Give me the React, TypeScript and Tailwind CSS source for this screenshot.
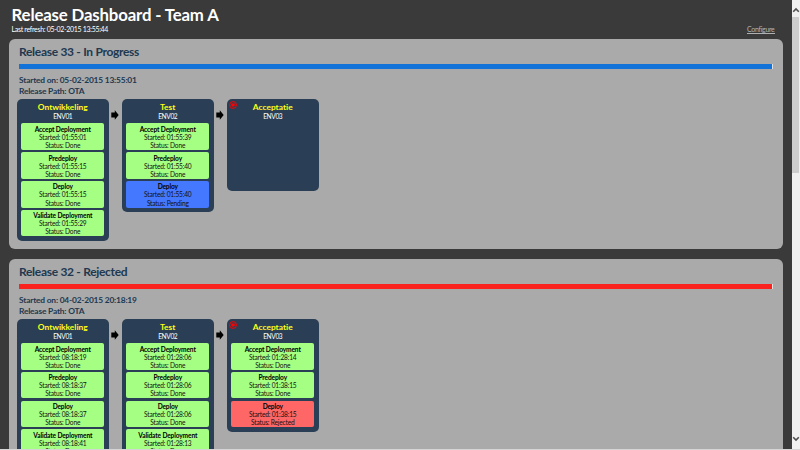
import React from "react";

type Step = { name: string; started: string; status: string };
type Env = { name: string; code: string; gated?: boolean; steps: Step[] };
type Release = { title: string; started: string; bar: string; envs: Env[] };

const step = (name: string, started: string, status = "Done"): Step => ({ name, started, status });

const releases: Release[] = [
  {
    title: "Release 33 - In Progress",
    started: "05-02-2015 13:55:01",
    bar: "bg-[#1373d8]",
    envs: [
      {
        name: "Ontwikkeling",
        code: "ENV01",
        steps: [
          step("Accept Deployment", "01:55:01"),
          step("Predeploy", "01:55:15"),
          step("Deploy", "01:55:15"),
          step("Validate Deployment", "01:55:29"),
        ],
      },
      {
        name: "Test",
        code: "ENV02",
        steps: [
          step("Accept Deployment", "01:55:39"),
          step("Predeploy", "01:55:40"),
          step("Deploy", "01:55:40", "Pending"),
        ],
      },
      { name: "Acceptatie", code: "ENV03", gated: true, steps: [] },
    ],
  },
  {
    title: "Release 32 - Rejected",
    started: "04-02-2015 20:18:19",
    bar: "bg-[#fb231d]",
    envs: [
      {
        name: "Ontwikkeling",
        code: "ENV01",
        steps: [
          step("Accept Deployment", "08:18:19"),
          step("Predeploy", "08:18:37"),
          step("Deploy", "08:18:37"),
          step("Validate Deployment", "08:18:41"),
        ],
      },
      {
        name: "Test",
        code: "ENV02",
        steps: [
          step("Accept Deployment", "01:28:06"),
          step("Predeploy", "01:28:06"),
          step("Deploy", "01:28:06"),
          step("Validate Deployment", "01:28:13"),
        ],
      },
      {
        name: "Acceptatie",
        code: "ENV03",
        gated: true,
        steps: [
          step("Accept Deployment", "01:28:14"),
          step("Predeploy", "01:38:15"),
          step("Deploy", "01:38:15", "Rejected"),
        ],
      },
    ],
  },
];

const statusColor: Record<string, string> = {
  Done: "bg-[#a4ff83]",
  Pending: "bg-[#4478ff]",
  Rejected: "bg-[#ff6767]",
};

function StepBox({ s }: { s: Step }) {
  return (
    <div
      className={`h-[26.6px] shrink-0 rounded-[2px] pt-[1.4px] text-center text-[6.6px] leading-[8.1px] tracking-[-0.19px] whitespace-nowrap text-[#111] ${statusColor[s.status]}`}
    >
      <div className="font-bold tracking-[-0.13px] text-black">{s.name}</div>
      <div>Started: {s.started}</div>
      <div>Status: {s.status}</div>
    </div>
  );
}

function EnvCard({ env }: { env: Env }) {
  return (
    <div className="relative flex min-h-[92px] w-[92.5px] flex-col rounded-[5px] bg-[#2a3f55] px-[4.7px] pt-[3px] pb-[4.4px]">
      {env.gated && (
        <svg className="absolute top-[2px] left-[2px]" width="8" height="8" viewBox="0 0 8 8">
          <circle cx="4" cy="4" r="3.4" fill="none" stroke="#ff0000" strokeWidth="1" />
          <path d="M2.3 2.6h3.4v1.7L4 6 2.3 4.3z" fill="#ff0000" />
        </svg>
      )}
      <div className="text-center text-[8.4px] leading-[10px] font-bold text-[#ffff18]">{env.name}</div>
      <div className="h-[11.4px] text-center text-[6.6px] leading-[9px] tracking-[-0.35px] text-white">{env.code}</div>
      <div className="flex flex-col gap-[2.2px]">
        {env.steps.map((s) => (
          <StepBox key={s.name} s={s} />
        ))}
      </div>
    </div>
  );
}

function Arrow() {
  return (
    <svg className="mt-[11px] ml-[2px]" width="8" height="10" viewBox="0 0 8 10">
      <path d="M0.3 2.5h3.5V0.3L7.7 5 3.8 9.7V7.5H0.3z" fill="#000" />
    </svg>
  );
}

function ReleasePanel({ r }: { r: Release }) {
  return (
    <section className="w-[774px] shrink-0 rounded-[6px] bg-[#aaaaaa] pt-[5px] pr-[10px] pb-[8px] pl-[10px] text-[#21384f]">
      <h2 className="h-[20px] text-[12px] leading-[16px] font-bold tracking-[-0.3px]">{r.title}</h2>
      <div className="h-[5px] w-[754px] bg-[#e0e0e0] pr-px">
        <div className={`h-full ${r.bar}`} />
      </div>
      <div className="mt-[6px] text-[8.4px] leading-[11px] font-bold tracking-[-0.19px]">
        <div>Started on: {r.started}</div>
        <div>Release Path: OTA</div>
      </div>
      <div className="mt-[2px] -ml-[2.5px] flex items-start">
        {r.envs.map((env, i) => (
          <React.Fragment key={env.name}>
            {i > 0 && (
              <div className="w-[12.5px] shrink-0">
                <Arrow />
              </div>
            )}
            <EnvCard env={env} />
          </React.Fragment>
        ))}
      </div>
    </section>
  );
}

export default function App() {
  return (
    <div className="flex h-[450px] w-[800px] overflow-hidden border-b border-[#d5d5d5] bg-[#3a3a3a] font-['Lato',sans-serif] [font-variant-ligatures:none]">
      <main className="flex w-[791.5px] shrink-0 flex-col overflow-hidden pl-[9px]">
        <header className="flex h-[39px] shrink-0 justify-between pt-[5px] pr-[17px] pl-[2.5px] text-white">
          <div>
            <h1 className="text-[16.8px] leading-[20px] font-bold tracking-[-0.15px]">Release Dashboard - Team A</h1>
            <div className="text-[7px] leading-[9px] tracking-[-0.31px]">Last refresh: 05-02-2015 13:55:44</div>
          </div>
          <a className="mt-[20px] h-[9px] border-b border-[#b0b0b0] text-[7px] leading-[9px] tracking-[-0.3px] text-[#b5b5b5]">Configure</a>
        </header>
        <div className="flex flex-col gap-[10px]">
          {releases.map((r) => (
            <ReleasePanel key={r.title} r={r} />
          ))}
        </div>
      </main>
      <aside className="flex flex-1 flex-col items-center bg-[#f0f0f0]">
        <svg className="mt-[7px]" width="8" height="6" viewBox="0 0 8 6">
          <path d="M1.2 4.8 4 2l2.8 2.8" fill="none" stroke="#505050" strokeWidth="1.6" />
        </svg>
        <div className="mt-[4px] h-[156px] w-[7px] bg-[#cdcdcd]" />
        <svg className="mt-auto mb-[7px]" width="8" height="6" viewBox="0 0 8 6">
          <path d="M1.2 1.2 4 4l2.8-2.8" fill="none" stroke="#505050" strokeWidth="1.6" />
        </svg>
      </aside>
    </div>
  );
}
